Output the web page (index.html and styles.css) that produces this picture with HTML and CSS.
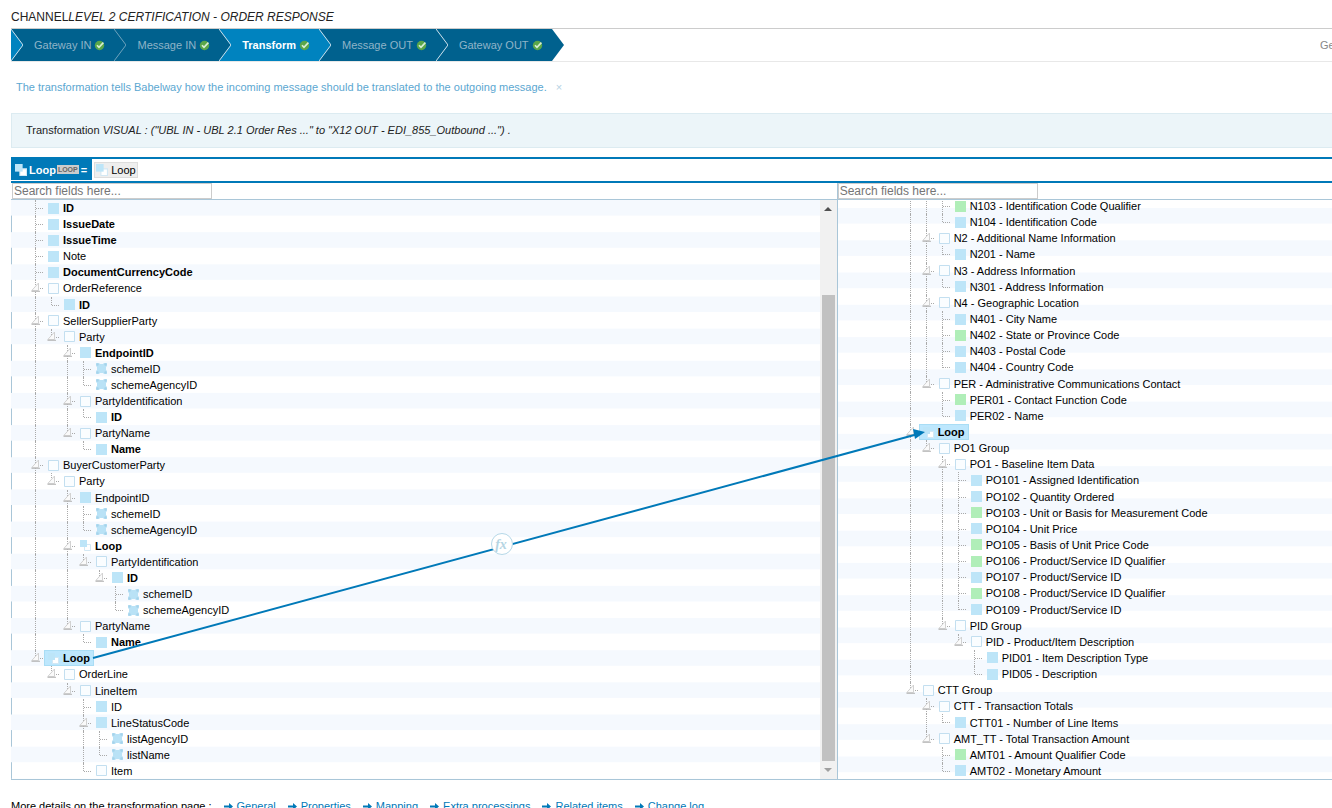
FILE: index.html
```html
<!DOCTYPE html>
<html lang="en">
<head>
<meta charset="utf-8">
<title>Channel - Transform</title>
<link rel="stylesheet" href="styles.css">
</head>
<body>
<svg class="defs" aria-hidden="true">
  <symbol id="ok" viewBox="0 0 11 11"><circle cx="5.5" cy="5.5" r="4.7" fill="#5aa64a"/><path d="M3 5.2 5 7.4 9.4 2.6" fill="none" stroke="#d9efd5" stroke-width="1.6"/></symbol>
  <symbol id="toggle" viewBox="0 0 11 11"><path d="M.8 8.500 7.500 1v7.500z" fill="#fafafa" stroke="#d2d2d2"/><path d="M.5 9.300h8.500" stroke="#b5b5b5"/></symbol>
  <symbol id="n-field" viewBox="0 0 11 11"><path d="M0 0h11v11H0z" fill="#bde5f8"/></symbol>
  <symbol id="n-code" viewBox="0 0 11 11"><path d="M0 0h11v11H0z" fill="#b0eeb8"/></symbol>
  <symbol id="n-group" viewBox="0 0 11 11"><path d="M.5.5h10v10H.5z" fill="#fafdff" stroke="#c3dff0"/></symbol>
  <symbol id="n-attr" viewBox="0 0 11 11"><path d="M0 0h3l1 1h3l1-1h3v3l-1 1v3l1 1v3H8l-1-1H4l-1 1H0V8l1-1V4L0 3z" fill="#b9e2f6"/><g fill="#a6d3ea"><circle cx="1.5" cy="1.5" r="1.2"/><circle cx="9.5" cy="1.5" r="1.2"/><circle cx="1.5" cy="9.5" r="1.2"/><circle cx="9.5" cy="9.5" r="1.2"/></g></symbol>
  <symbol id="n-loop" viewBox="0 0 11 11"><path d="M4.5 4.5h6v6h-6z" fill="#fff" stroke="#d3e8f4"/><path d="M0 0h7v7H0z" fill="#bde5f8"/></symbol>
  <symbol id="go" viewBox="0 0 9 7"><path d="M0 2.5h5V0l4 3.5L5 7V4.5H0z" fill="#0079b8"/></symbol>
</svg>

<h1 class="title">CHANNEL<em>LEVEL 2 CERTIFICATION - ORDER RESPONSE</em></h1>

<nav class="steps">
  <a class="step after-active" href="#"><svg class="chev" viewBox="0 0 12 32"><path class="back" d="M0 0 12 16 0 32z"/><path class="edge" d="M0 0 12 16 0 32"/></svg>Gateway IN<svg class="ok"><use href="#ok"/></svg></a>
  <a class="step faint" href="#"><svg class="chev" viewBox="0 0 12 32"><path class="back" d="M0 0 12 16 0 32z"/><path class="edge" d="M0 0 12 16 0 32"/></svg>Message IN<svg class="ok"><use href="#ok"/></svg></a>
  <a class="step active" href="#"><svg class="chev" viewBox="0 0 12 32"><path class="back" d="M0 0 12 16 0 32z"/><path class="edge" d="M0 0 12 16 0 32"/></svg>Transform<svg class="ok"><use href="#ok"/></svg></a>
  <a class="step after-active" href="#"><svg class="chev" viewBox="0 0 12 32"><path class="back" d="M0 0 12 16 0 32z"/><path class="edge" d="M0 0 12 16 0 32"/></svg>Message OUT<svg class="ok"><use href="#ok"/></svg></a>
  <a class="step" href="#"><svg class="chev" viewBox="0 0 12 32"><path class="back" d="M0 0 12 16 0 32z"/><path class="edge" d="M0 0 12 16 0 32"/></svg>Gateway OUT<svg class="ok"><use href="#ok"/></svg></a>
  <svg class="chev" viewBox="0 0 12 32"><path class="back" d="M0 0 12 16 0 32z"/></svg>
  <span class="steps-more">Ge</span>
</nav>

<p class="hint">The transformation tells Babelway how the incoming message should be translated to the outgoing message.<button class="close" aria-label="Close">×</button></p>

<div class="summary">Transformation <i>VISUAL : ("UBL IN - UBL 2.1 Order Res ..." to "X12 OUT - EDI_855_Outbound ...") .</i></div>

<div class="formula">
  <div class="target"><svg class="node"><use href="#n-loop"/></svg><b>Loop</b><small>LOOP</small><b>=</b></div>
  <button class="source"><svg class="node"><use href="#n-loop"/></svg>Loop</button>
</div>

<main class="workspace">
  <section class="pane">
    <div class="search"><input type="text" placeholder="Search fields here..." aria-label="Search source fields"></div>
    <div class="view">
      <div class="tree tree-in" id="tree-in"></div>
      <div class="scrollbar"><span class="arrow up"></span><span class="track"><span class="thumb"></span></span><span class="arrow down"></span></div>
    </div>
  </section>
  <section class="pane pane-out">
    <div class="search"><input type="text" placeholder="Search fields here..." aria-label="Search target fields"></div>
    <div class="view clip"><div class="tree tree-out" id="tree-out"></div></div>
  </section>
  <svg class="links" aria-hidden="true">
    <path d="M82 475 907 251" stroke="#0079b8" stroke-width="2"/>
    <path d="M914 249 902 246 904 256z" fill="#0079b8"/>
    <circle cx="491" cy="361" r="10.500" fill="#fff" stroke="#b5d8e8"/>
    <text class="fx" x="490" y="366" text-anchor="middle">fx</text>
  </svg>
</main>

<footer class="more">
  <span>More details on the transformation page :</span>
  <a href="#"><svg class="go"><use href="#go"/></svg>General</a>
  <a href="#"><svg class="go"><use href="#go"/></svg>Properties</a>
  <a href="#"><svg class="go"><use href="#go"/></svg>Mapping</a>
  <a href="#"><svg class="go"><use href="#go"/></svg>Extra processings</a>
  <a href="#"><svg class="go"><use href="#go"/></svg>Related items</a>
  <a href="#"><svg class="go"><use href="#go"/></svg>Change log</a>
</footer>
<script src="tree.js"></script>
</body>
</html>
```
FILE: styles.css
```css
* { box-sizing: border-box; }
body {
  margin: 0;
  padding: 9px 0 0 11px;
  height: 100vh;
  overflow: hidden;
  background: #fff;
  color: #222;
  font: 11px/16px "Liberation Sans", Arial, sans-serif;
}
svg { display: block; flex: none; }
.defs { display: none; }
a { text-decoration: none; color: #0079b8; }
button { font: inherit; }
.title { margin: 0 0 3px; font-size: 12px; font-weight: 400; }
.steps { display: flex; border-top: 1px solid #ccc; border-bottom: 1px solid #e8e8e8; }
.step {
  display: flex;
  align-items: center;
  height: 32px;
  padding-right: 9px;
  background: #00618e;
  color: #8fb4c8;
  white-space: nowrap;
}
.step .chev { margin-right: 11px; }
.chev { width: 12px; height: 32px; }
.back { fill: #00618e; }
.edge { fill: none; stroke: #cfe3ee; }
.faint .edge { stroke: #6fa3bd; }
.after-active .back { fill: #0083bf; }
.step.active { background: #0083bf; color: #fff; font-weight: 700; }
.ok { width: 11px; height: 11px; margin-left: 3px; }
.steps-more { width: 12px; margin: 8px 0 0 auto; overflow: hidden; color: #888; }
.hint { display: flex; align-items: center; margin: 17px 0 18px; padding-left: 5px; color: #5ba7d1; }
.close { border: 0; padding: 0; margin-left: 9px; background: none; color: #b5d2e4; line-height: 16px; }
.summary { padding: 8px 14px 9px; border: 1px solid #dcebf1; background: #ecf5f9; border-right: 0; }
.formula {
  display: flex;
  height: 26px;
  margin-top: 9px;
  border-top: 2px solid #0079b8;
  border-bottom: 2px solid #0079b8;
}
.target {
  display: flex;
  align-items: center;
  gap: 1px;
  padding: 0 5px 0 4px;
  border-bottom: 1px solid #fff;
  background: #0079b8;
  color: #fff;
}
.target .node, .source .node { width: 12px; height: 12px; margin-right: 1px; }
.target small {
  padding: 0 1px;
  margin-right: 1px;
  background: #ccc;
  color: #666;
  font-size: 7px;
  line-height: 9px;
  font-weight: 700;
}
.source {
  display: flex;
  align-items: center;
  gap: 2px;
  height: 16px;
  margin: 3px 2px;
  padding: 0 1px;
  border: 1px solid #ddd;
  background: #eee;
  color: #000;
}
.workspace { position: relative; display: grid; grid-template-columns: 5fr 3fr; }
.pane { min-width: 0; }
.pane-out { border-left: 1px solid #a9c6d8; }
.search { height: 17px; border-bottom: 1px solid #a9c6d8; }
.search input {
  display: block;
  width: 200px;
  height: 16px;
  margin-left: 1px;
  padding: 0 1px;
  border: 1px solid #ccc;
  font: 12px/14px "Liberation Sans", Arial, sans-serif;
}
.pane-out .search input { margin-left: 0; }
.search input::placeholder { color: #757575; }
.view { display: flex; height: 580px; border-bottom: 1px solid #a9c6d8; }
.pane:first-child .view { border-left: 1px solid #a9c6d8; }
.clip { overflow: hidden; }
.tree {
  display: grid;
  grid-auto-rows: 1fr;
  flex: 1;
  min-width: 0;
  height: 579px;
  color: #000;
  background-image: linear-gradient(#f5f9fe 50%, transparent 50%);
  background-size: 100% calc(100% / 18);
}
.tree-in { margin-left: -1px; padding-left: 21px; }
.tree-out { height: 581px; margin-top: -2px; padding-left: 69px; background-position: 0 10px; }
.row { display: flex; align-items: stretch; white-space: nowrap; line-height: 16px; }
.cell { position: relative; width: 16px; flex: none; }
.cell.line::before, .cell.half::before {
  content: "";
  position: absolute;
  left: 3px;
  top: 0;
  bottom: 0;
  border-left: 1px dotted #aaa;
}
.cell.half::before { bottom: 8px; }
.cell.stub::after {
  content: "";
  position: absolute;
  left: 4px;
  top: 8px;
  width: 7px;
  border-top: 1px dotted #aaa;
}
.cell .toggle { position: absolute; z-index: 1; left: -1px; top: 2px; width: 11px; height: 11px; }
.item { display: flex; align-items: center; gap: 4px; }
.item .node { width: 11px; height: 11px; }
.item.bold { font-weight: 700; }
.item.selected { margin-left: -4px; padding: 0 3px; border: 1px solid #a9ddf5; background: #bde7fd; line-height: 14px; }
.scrollbar { display: flex; flex-direction: column; width: 17px; background: #f1f1f1; }
.arrow { width: 0; height: 0; margin: 7px auto; border: 4px solid transparent; }
.arrow.up { border-top: 0; border-bottom-color: #505050; }
.arrow.down { border-bottom: 0; border-top-color: #a0a0a0; }
.track { flex: 1; padding: 77px 2px 0; }
.thumb { display: block; height: 100%; background: #c1c1c1; }
.links { position: absolute; left: 0; top: 0; width: 100%; height: 100%; z-index: 2; pointer-events: none; }
.fx { font: italic bold 14px "Liberation Serif", serif; fill: #b5d5e3; }
.more { display: flex; gap: 12px; padding-top: 18px; color: #000; white-space: nowrap; }
.more a { display: flex; align-items: center; gap: 4px; }
.go { width: 9px; height: 7px; }
```
FILE: tree.js
```js
// Each line: depth, kind (f field, c code, g group, a attribute, l loop), flags (b bold, s selected), label.
const source = `0 fb ID
0 fb IssueDate
0 fb IssueTime
0 f Note
0 fb DocumentCurrencyCode
0 g OrderReference
1 fb ID
0 g SellerSupplierParty
1 g Party
2 fb EndpointID
3 a schemeID
3 a schemeAgencyID
2 g PartyIdentification
3 fb ID
2 g PartyName
3 fb Name
0 g BuyerCustomerParty
1 g Party
2 f EndpointID
3 a schemeID
3 a schemeAgencyID
2 lb Loop
3 g PartyIdentification
4 fb ID
5 a schemeID
5 a schemeAgencyID
2 g PartyName
3 fb Name
0 lbs Loop
1 g OrderLine
2 g LineItem
3 f ID
3 f LineStatusCode
4 a listAgencyID
4 a listName
3 g Item`;

const target = `2 c N103 - Identification Code Qualifier
2 f N104 - Identification Code
1 g N2 - Additional Name Information
2 f N201 - Name
1 g N3 - Address Information
2 f N301 - Address Information
1 g N4 - Geographic Location
2 f N401 - City Name
2 c N402 - State or Province Code
2 f N403 - Postal Code
2 f N404 - Country Code
1 g PER - Administrative Communications Contact
2 c PER01 - Contact Function Code
2 f PER02 - Name
0 lbs Loop
1 g PO1 Group
2 g PO1 - Baseline Item Data
3 f PO101 - Assigned Identification
3 f PO102 - Quantity Ordered
3 c PO103 - Unit or Basis for Measurement Code
3 f PO104 - Unit Price
3 c PO105 - Basis of Unit Price Code
3 c PO106 - Product/Service ID Qualifier
3 f PO107 - Product/Service ID
3 c PO108 - Product/Service ID Qualifier
3 f PO109 - Product/Service ID
2 g PID Group
3 g PID - Product/Item Description
4 f PID01 - Item Description Type
4 f PID05 - Description
0 g CTT Group
1 g CTT - Transaction Totals
2 f CTT01 - Number of Line Items
1 g AMT_TT - Total Transaction Amount
2 c AMT01 - Amount Qualifier Code
2 f AMT02 - Monetary Amount`;

const icons = { f: "field", c: "code", g: "group", a: "attr", l: "loop" };

function build(id, text) {
  const rows = text.split("\n").map(line => {
    const [, depth, flags, label] = line.match(/^(\d) (\w+) (.*)$/);
    return { depth: +depth, flags, label };
  });
  const continues = (i, level) => {
    for (let j = i + 1; j < rows.length && rows[j].depth >= level; j++) {
      if (rows[j].depth === level) return true;
    }
    return false;
  };
  document.getElementById(id).innerHTML = rows.map((row, i) => {
    let cells = "";
    for (let level = 0; level < row.depth; level++) {
      cells += `<span class="cell${continues(i, level) ? " line" : ""}"></span>`;
    }
    const parent = rows[i + 1] && rows[i + 1].depth > row.depth;
    cells += `<span class="cell stub ${continues(i, row.depth) ? "line" : "half"}">${
      parent ? '<svg class="toggle"><use href="#toggle"/></svg>' : ""}</span>`;
    const cls = (row.flags.includes("b") ? " bold" : "") + (row.flags.includes("s") ? " selected" : "");
    return `<div class="row">${cells}<span class="item${cls}"><svg class="node"><use href="#n-${
      icons[row.flags[0]]}"/></svg>${row.label}</span></div>`;
  }).join("");
}

build("tree-in", source);
build("tree-out", target);
```
